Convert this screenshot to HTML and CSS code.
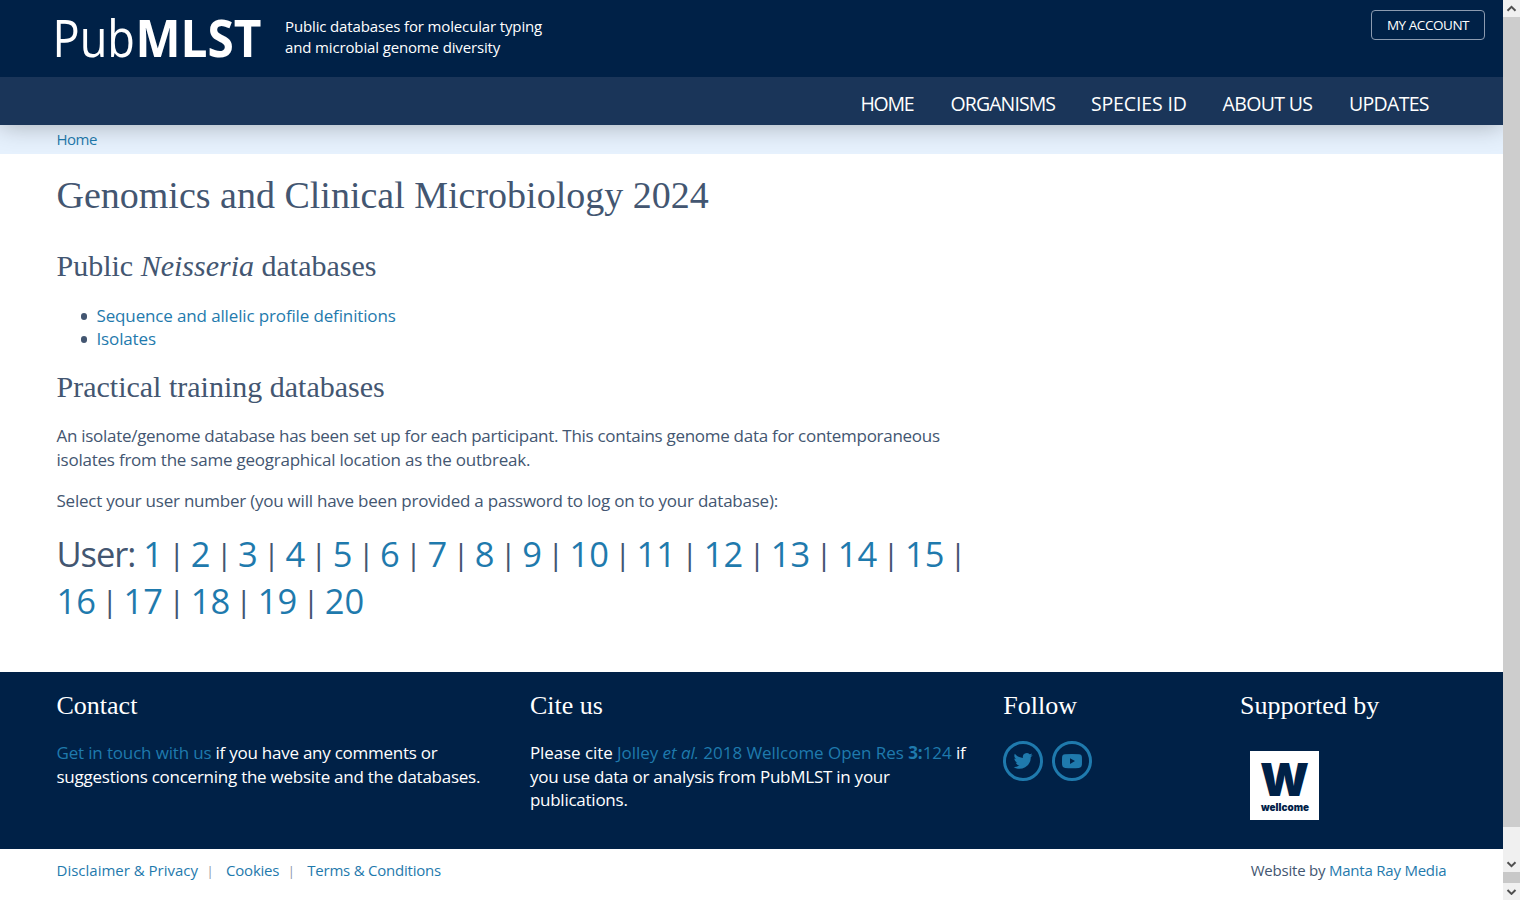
FILE: index.html
```html
<!DOCTYPE html>
<html lang="en">
<head>
<meta charset="utf-8">
<title>Genomics and Clinical Microbiology 2024 - PubMLST</title>
<link rel="stylesheet" href="styles.css">
</head>
<body>
<div class="window">
<div class="page">
  <header class="header">
    <div class="masthead">
      <svg class="logo" width="206" height="46" viewBox="0 0 206 46" role="img" aria-label="PubMLST">
        <text class="logo-light" x="-3.500" y="42.300" textLength="82.500" lengthAdjust="spacingAndGlyphs">Pub</text>
        <text class="logo-bold" x="79.500" y="42.300" textLength="126" lengthAdjust="spacingAndGlyphs">MLST</text>
      </svg>
      <p class="tagline">Public databases for molecular typing<br>and microbial genome diversity</p>
      <a class="account">MY ACCOUNT</a>
    </div>
    <nav class="nav">
      <a class="nav-home">HOME</a><a class="nav-organisms">ORGANISMS</a><a class="nav-species">SPECIES ID</a><a class="nav-about">ABOUT US</a><a class="nav-updates">UPDATES</a>
    </nav>
  </header>
  <div class="breadcrumb"><a>Home</a></div>
  <main class="main">
    <h1>Genomics and Clinical Microbiology 2024</h1>
    <h2>Public <i>Neisseria</i> databases</h2>
    <ul class="links">
      <li><a>Sequence and allelic profile definitions</a></li>
      <li><a>Isolates</a></li>
    </ul>
    <h2>Practical training databases</h2>
    <p><span class="dense">An isolate/genome database has been set up for each participant. This contains genome data for contemporaneous</span><br>isolates from the same geographical location as the outbreak.</p>
    <p>Select your user number (you will have been provided a password to log on to your database):</p>
    <p class="users"><span class="user-label">User: </span><a>1</a><s> | </s><a>2</a><s> | </s><a>3</a><s> | </s><a>4</a><s> | </s><a>5</a><s> | </s><a>6</a><s> | </s><a>7</a><s> | </s><a>8</a><s> | </s><a>9</a><s> | </s><a>10</a><s> | </s><a>11</a><s> | </s><a>12</a><s> | </s><a>13</a><s> | </s><a>14</a><s> | </s><a>15</a><s> | </s><br><a>16</a><s> | </s><a>17</a><s> | </s><a>18</a><s> | </s><a>19</a><s> | </s><a>20</a></p>
  </main>
  <footer class="footer">
    <section>
      <h3>Contact</h3>
      <p><a class="touch">Get in touch with us</a> if you have any comments or<br>suggestions concerning the website and the databases.</p>
    </section>
    <section>
      <h3>Cite us</h3>
      <p><span class="please">Please cite </span><a class="cite">Jolley <i>et al.</i> 2018 Wellcome Open Res <b>3:</b>124</a> if<br>you use data or analysis from PubMLST in your<br>publications.</p>
    </section>
    <section>
      <h3>Follow</h3>
      <div class="social">
        <a class="round"><svg width="20" height="20" viewBox="0 0 24 24"><path d="M23.6 4.7c-.8.4-1.7.6-2.7.8 1-.6 1.700-1.500 2-2.600-.9.500-1.900.9-3 1.100A4.700 4.700 0 0 0 11.900 8.300C8 8.100 4.500 6.200 2.200 3.400c-1.200 2.200-.6 4.900 1.500 6.300-.8 0-1.500-.2-2.100-.6 0 2.300 1.500 4.200 3.800 4.700-.7.200-1.400.2-2.100.1.600 1.900 2.300 3.200 4.400 3.300A9.500 9.500 0 0 1 .7 19.100a13.400 13.400 0 0 0 20.600-11.900c.9-.7 1.700-1.500 2.300-2.500z"/></svg></a>
        <a class="round"><svg width="20" height="20" viewBox="0 0 20 20"><path fill-rule="evenodd" d="M3 3.200Q10 2.600 17 3.200Q19.800 3.500 19.900 6Q20.100 10 19.900 14Q19.700 16.700 17 17Q10 17.400 3 17Q.3 16.700.1 14Q-.1 10 .1 6Q.2 3.500 3 3.200zM8 7.200V13L13 10.100z"/></svg></a>
      </div>
    </section>
    <section>
      <h3>Supported by</h3>
      <svg class="wellcome" width="69" height="69" viewBox="0 0 69 69" role="img" aria-label="wellcome">
        <rect width="69" height="69"/>
        <text class="mark" x="10" y="45" textLength="49" lengthAdjust="spacingAndGlyphs">W</text>
        <text class="word" x="11" y="59.500" textLength="48" lengthAdjust="spacingAndGlyphs">wellcome</text>
      </svg>
    </section>
  </footer>
  <div class="bottom">
    <div class="legal"><a>Disclaimer &amp; Privacy</a><span class="bar">|</span><a class="cookies">Cookies</a><span class="bar">|</span><a class="terms">Terms &amp; Conditions</a></div>
    <div class="credit">Website by <a>Manta Ray Media</a></div>
  </div>
</div>
<div class="scrollbar">
  <div class="arrow"><svg width="11" height="7" viewBox="0 0 11 7"><path d="M1.500 5.700L5.500 1.800L9.500 5.700"/></svg></div>
  <div class="thumb"></div>
  <div class="track"><svg width="11" height="7" viewBox="0 0 11 7"><path d="M1.500 1.300L5.500 5.200L9.500 1.300"/></svg></div>
  <div class="stub"></div>
  <div class="arrow"><svg width="11" height="7" viewBox="0 0 11 7"><path d="M1.500 2L5.500 5.900L9.500 2"/></svg></div>
</div>
</div>
</body>
</html>
```
FILE: styles.css
```css
* { box-sizing: border-box; }
body { margin: 0; background: #fff; color: #435671; font: 17px/23.6px "Open Sans", "Noto Sans", sans-serif; letter-spacing: -0.23px; }
h1, h2, h3, p, ul { margin: 0; font-weight: 400; }
h1, h2, h3 { font-family: "Liberation Serif", serif; letter-spacing: 0; }
a { color: #1f7aad; text-decoration: none; white-space: nowrap; }
.window { display: flex; width: 1520px; height: 900px; overflow: hidden; }
.page { width: 1503px; }

.header { position: relative; height: 125px; background: #002147; color: #fff; box-shadow: 0 0 24px rgba(0, 0, 0, .3); clip-path: inset(0 0 -30px 0); }
.masthead { display: flex; align-items: flex-start; height: 77px; padding: 0 18px 0 56px; }
.logo { margin-top: 15px; overflow: visible; fill: #fff; }
.logo-light { font: 370 51.5px "Open Sans", sans-serif; letter-spacing: 0; }
.logo-bold { font: 700 51.5px "Open Sans", sans-serif; letter-spacing: 0; }
.tagline { flex: 1; margin: 16px 0 0 23px; font-size: 15px; line-height: 21px; letter-spacing: -0.14px; }
.account { width: 114px; height: 30px; margin-top: 10px; border: 1px solid #8c9bb0; border-radius: 4px; color: #fff; font-size: 13.5px; line-height: 28px; text-align: center; letter-spacing: -0.45px; }
.nav { display: flex; justify-content: flex-end; height: 48px; padding-right: 73.5px; background: #1a3559; font-size: 19.5px; line-height: 54px; }
.nav a { color: #fff; }
.nav-home { width: 90px; letter-spacing: -1.3px; }
.nav-organisms { width: 140.5px; letter-spacing: -0.9px; }
.nav-species { width: 131.5px; letter-spacing: -0.15px; }
.nav-about { width: 126.5px; letter-spacing: -0.65px; }
.nav-updates { width: 80.5px; letter-spacing: -0.7px; }

.breadcrumb { height: 29px; padding-left: 56.5px; background: #e6f1fd; font-size: 15px; line-height: 29px; letter-spacing: -0.5px; }

.main { height: 518px; padding: 19px 0 0 56.5px; }
h1 { font-size: 38px; line-height: 44px; margin-bottom: 32px; }
h2 { font-size: 30px; line-height: 34px; margin-bottom: 20.5px; }
.links { padding-left: 40px; margin-bottom: 20.5px; line-height: 23px; letter-spacing: -0.14px; list-style: none; }
.links li::before { content: ""; display: inline-block; width: 6.5px; height: 6.5px; margin: 0 9.5px 0 -16px; border-radius: 50%; background: #435671; vertical-align: 2px; }
.links + h2 { margin-bottom: 20px; }
.main p { margin-bottom: 17.5px; white-space: nowrap; }
.dense { letter-spacing: -0.285px; }
.main .users { font-size: 34.5px; line-height: 47.3px; letter-spacing: 0; }
.users s { margin: 0 0.85px 0 -0.8px; text-decoration: none; font-size: 30px; font-weight: 500; line-height: 0; letter-spacing: -1.5px; vertical-align: 2px; white-space: pre; }
.user-label { white-space: pre; letter-spacing: -1.05px; }

.footer { display: grid; grid-template-columns: 473.4px 473.4px 236.7px 236.7px; height: 177px; padding: 18.5px 0 0 56.5px; background: #002147; color: #fff; letter-spacing: -0.25px; white-space: nowrap; }
h3 { font-size: 26px; line-height: 30px; margin-bottom: 20.5px; }
.touch { letter-spacing: -0.16px; }
.please { letter-spacing: -0.08px; }
.cite { letter-spacing: -0.04px; }
.social { display: flex; gap: 9px; }
.round { display: grid; place-items: center; width: 40px; height: 40px; border: 3px solid #1f7aad; border-radius: 50%; fill: #1f7aad; }
.wellcome { display: block; margin: 30px 0 0 10px; fill: #fff; }
.wellcome text { fill: #002147; letter-spacing: 0; }
.mark { font: 900 46px Inter, sans-serif; }
.word { font: 900 10.5px Inter, sans-serif; }

.bottom { display: flex; justify-content: space-between; padding: 0 56.5px 0 56.5px; font-size: 15px; line-height: 43px; letter-spacing: -0.22px; }
.legal a:first-child { letter-spacing: 0; }
.bar { display: inline-block; width: 28px; padding-right: 4px; text-align: center; color: #8795a8; font-size: 13px; }

.scrollbar { display: flex; flex-direction: column; width: 17px; background: #f0f0f0; }
.scrollbar svg { fill: none; stroke: #505050; stroke-width: 2; }
.arrow { display: grid; place-items: center; height: 17px; }
.thumb { height: 810px; background: #cdcdcd; }
.track { display: flex; align-items: flex-end; justify-content: center; height: 45px; padding-bottom: 4px; }
.stub { height: 11px; background: #c8c8c8; }
```
